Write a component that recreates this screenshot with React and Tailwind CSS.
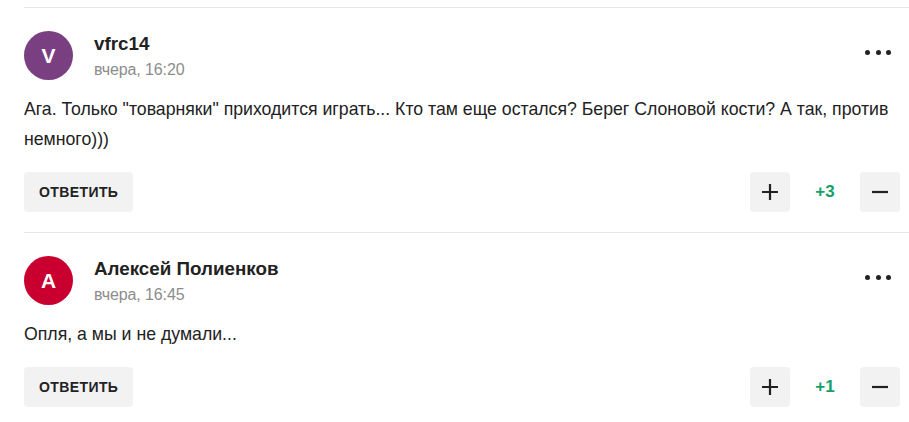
import React from "react";

const comments = [
  {
    letter: "V",
    color: "bg-[#7a3f80]",
    name: "vfrc14",
    date: "вчера, 16:20",
    text: 'Ага. Только "товарняки" приходится играть... Кто там еще остался? Берег Слоновой кости? А так, против немного)))',
    score: "+3",
  },
  {
    letter: "А",
    color: "bg-[#c9002f]",
    name: "Алексей Полиенков",
    date: "вчера, 16:45",
    text: "Опля, а мы и не думали...",
    score: "+1",
  },
];

function Dots() {
  return (
    <button className="mr-[9px] flex h-6 w-[26px] items-center justify-between">
      <span className="h-[5px] w-[5px] rounded-full bg-[#222]" />
      <span className="h-[5px] w-[5px] rounded-full bg-[#222]" />
      <span className="h-[5px] w-[5px] rounded-full bg-[#222]" />
    </button>
  );
}

function Comment({ c }) {
  return (
    <div className="border-t border-[#e6e6e6] pt-[23px] pb-[20px] pr-[9px]">
      <div className="flex items-start">
        <div
          className={`flex h-[49px] w-[49px] shrink-0 items-center justify-center rounded-full ${c.color} text-[21px] font-bold text-white`}
        >
          {c.letter}
        </div>
        <div className="ml-[21px] flex flex-1 flex-col pt-[1px]">
          <div className="text-[18.8px] font-bold leading-[24px] text-[#222]">{c.name}</div>
          <div className="mt-[4px] text-[16px] leading-[20px] text-[#8c8c8c] tracking-[-0.1px]">{c.date}</div>
        </div>
        <div className="pt-[9px]">
          <Dots />
        </div>
      </div>
      <p className="mt-[14px] text-[17.7px] leading-[30px] text-[#222]">{c.text}</p>
      <div className="mt-[18px] flex items-center">
        <button className="h-[40px] rounded-[4px] bg-[#f2f2f2] px-[15px] text-[14px] font-bold tracking-[0.4px] text-[#222]">
          ОТВЕТИТЬ
        </button>
        <div className="ml-auto flex items-center">
          <button className="flex h-[40px] w-[40px] items-center justify-center rounded-[4px] bg-[#f2f2f2]">
            <svg width="16" height="16" viewBox="0 0 16 16">
              <path d="M8 0v16M0 8h16" stroke="#222" strokeWidth="2.2" />
            </svg>
          </button>
          <div className="w-[70px] text-center text-[17px] font-bold text-[#14a06b]">{c.score}</div>
          <button className="flex h-[40px] w-[40px] items-center justify-center rounded-[4px] bg-[#f2f2f2]">
            <svg width="16" height="16" viewBox="0 0 16 16">
              <path d="M0 8h16" stroke="#222" strokeWidth="2.2" />
            </svg>
          </button>
        </div>
      </div>
    </div>
  );
}

export default function App() {
  return (
    <div className="h-[422px] w-[909px] overflow-hidden bg-white pl-[24px] pt-[7px] font-['Liberation_Sans',Arial,sans-serif]">
      {comments.map((c, i) => (
        <Comment key={i} c={c} />
      ))}
    </div>
  );
}
